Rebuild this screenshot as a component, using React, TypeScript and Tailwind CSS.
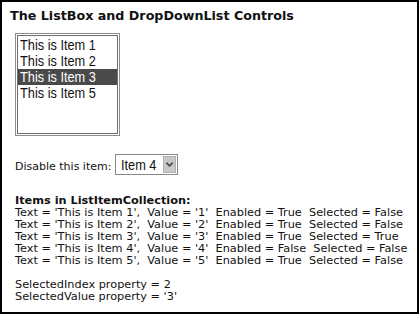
import { ChevronDown } from 'lucide-react';

const LIST_ITEMS = [
  { text: 'This is Item 1', selected: false },
  { text: 'This is Item 2', selected: false },
  { text: 'This is Item 3', selected: true },
  { text: 'This is Item 5', selected: false },
];

const COLLECTION = [
  "Text = 'This is Item 1',  Value = '1'  Enabled = True  Selected = False",
  "Text = 'This is Item 2',  Value = '2'  Enabled = True  Selected = False",
  "Text = 'This is Item 3',  Value = '3'  Enabled = True  Selected = True",
  "Text = 'This is Item 4',  Value = '4'  Enabled = False  Selected = False",
  "Text = 'This is Item 5',  Value = '5'  Enabled = True  Selected = False",
];

export default function App() {
  return (
    <div
      className="w-[419px] h-[314px] border-2 border-black bg-white text-[#111] overflow-hidden"
      style={{ fontFamily: '"DejaVu Sans", Verdana, sans-serif' }}
    >
      {/* Heading */}
      <div className="pl-[8px] pt-[6px] text-[12.7px] leading-[16px] font-bold">
        The ListBox and DropDownList Controls
      </div>

      {/* ListBox */}
      <div className="ml-[13px] mt-[9px] w-[105px] h-[103px] border border-[#8c8c8c] p-px">
        <div className="h-full border border-[#6e6e6e] pt-px">
          {LIST_ITEMS.map((item) => (
            <div
              key={item.text}
              className={`h-[16px] pl-[2px] text-[15px] leading-[16px] whitespace-nowrap ${item.selected ? 'bg-[#4a4a4a] text-white' : ''}`}
              style={{ fontFamily: '"Liberation Sans", Arial, sans-serif' }}
            >
              <span className="inline-block origin-left scale-x-[0.85]">{item.text}</span>
            </div>
          ))}
        </div>
      </div>

      {/* DropDownList */}
      <div className="ml-[13px] mt-[18px] flex items-center gap-[4px]">
        <span className="text-[11px] leading-[13px] pt-[3px]">Disable this item:</span>
        <div className="w-[63px] h-[21px] border border-[#8a8a8a] flex items-center justify-between pl-[5px] pr-px">
          <span
            className="text-[15px] leading-[16px] inline-block origin-left scale-x-[0.85] whitespace-nowrap"
            style={{ fontFamily: '"Liberation Sans", Arial, sans-serif' }}
          >
            Item 4
          </span>
          <div className="w-[16px] h-[17px] bg-[#c8c8c8] border border-[#b0b0b0] flex items-center justify-center">
            <ChevronDown size={11} strokeWidth={3.5} className="text-[#4a4a4a]" />
          </div>
        </div>
      </div>

      {/* Collection dump */}
      <div className="ml-[13px] mt-[20px] text-[11.3px] leading-[12px] whitespace-pre">
        <div className="font-bold">Items in ListItemCollection:</div>
        {COLLECTION.map((line) => (
          <div key={line}>{line}</div>
        ))}
        <div className="h-[12px]" />
        <div>SelectedIndex property = 2</div>
        <div>SelectedValue property = '3'</div>
      </div>
    </div>
  );
}
